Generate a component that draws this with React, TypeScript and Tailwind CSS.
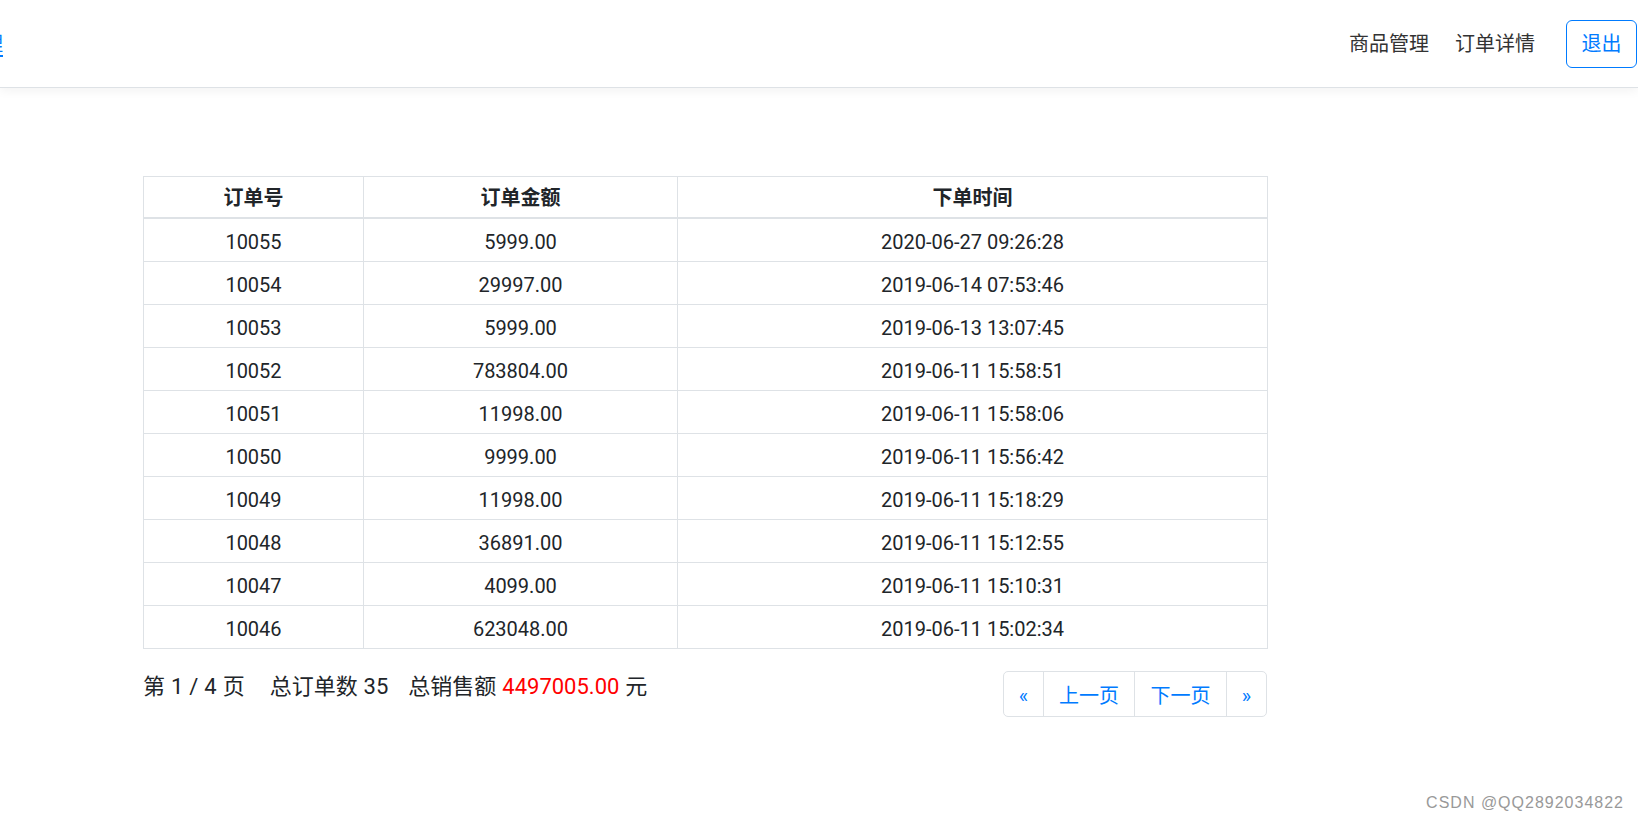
import React from "react";

type Order = { id: string; amount: string; time: string };

const orders: Order[] = [
  { id: "10055", amount: "5999.00", time: "2020-06-27 09:26:28" },
  { id: "10054", amount: "29997.00", time: "2019-06-14 07:53:46" },
  { id: "10053", amount: "5999.00", time: "2019-06-13 13:07:45" },
  { id: "10052", amount: "783804.00", time: "2019-06-11 15:58:51" },
  { id: "10051", amount: "11998.00", time: "2019-06-11 15:58:06" },
  { id: "10050", amount: "9999.00", time: "2019-06-11 15:56:42" },
  { id: "10049", amount: "11998.00", time: "2019-06-11 15:18:29" },
  { id: "10048", amount: "36891.00", time: "2019-06-11 15:12:55" },
  { id: "10047", amount: "4099.00", time: "2019-06-11 15:10:31" },
  { id: "10046", amount: "623048.00", time: "2019-06-11 15:02:34" },
];

function Navbar() {
  return (
    <nav className="h-[88px] bg-white border-b border-[#dee2e6] shadow-[0_3px_10px_rgba(0,0,0,0.05)] flex items-center justify-between pr-px">
      <a className="-ml-[77px] text-[20px] leading-[30px] text-[#007bff] underline underline-offset-4">
        后台管理
      </a>
      <div className="flex items-center">
        <a className="text-[20px] leading-[30px] text-[#333]">商品管理</a>
        <a className="ml-[26px] text-[20px] leading-[30px] text-[#333]">订单详情</a>
        <button className="ml-[31px] w-[71px] h-[48px] border border-[#007bff] rounded-[6px] text-[20px] text-[#007bff] flex items-center justify-center">
          退出
        </button>
      </div>
    </nav>
  );
}

function OrderTable() {
  return (
    <table className="w-[1124px] table-fixed border-collapse text-[20px] text-[#212529]">
      <colgroup>
        <col className="w-[220px]" />
        <col className="w-[314px]" />
        <col className="w-[590px]" />
      </colgroup>
      <thead>
        <tr>
          {["订单号", "订单金额", "下单时间"].map((h) => (
            <th
              key={h}
              className="border border-[#dee2e6] border-b-2 pt-[9px] pb-[7px] leading-[24px] font-bold text-center"
            >
              {h}
            </th>
          ))}
        </tr>
      </thead>
      <tbody>
        {orders.map((o) => (
          <tr key={o.id}>
            <td className="border border-[#dee2e6] pt-[10px] pb-[6px] leading-[26px] text-center">{o.id}</td>
            <td className="border border-[#dee2e6] pt-[10px] pb-[6px] leading-[26px] text-center">{o.amount}</td>
            <td className="border border-[#dee2e6] pt-[10px] pb-[6px] leading-[26px] text-center">{o.time}</td>
          </tr>
        ))}
      </tbody>
    </table>
  );
}

function Pager() {
  return (
    <div className="flex border border-[#dee2e6] rounded-[5px] text-[20px] text-[#007bff]">
      <a className="w-[39px] h-[44px] flex items-center justify-center pt-[4px]">«</a>
      <a className="w-[91px] h-[44px] flex items-center justify-center border-l border-[#dee2e6] pt-[4px]">上一页</a>
      <a className="w-[92px] h-[44px] flex items-center justify-center border-l border-[#dee2e6] pt-[4px]">下一页</a>
      <a className="w-[40px] h-[44px] flex items-center justify-center border-l border-[#dee2e6] pt-[4px]">»</a>
    </div>
  );
}

export default function App() {
  return (
    <div className="relative min-h-screen bg-white font-['Roboto','Noto_Sans_CJK_SC',sans-serif] overflow-hidden">
      <Navbar />
      <main className="pl-[143px] pt-[88px]">
        <OrderTable />
        <div className="w-[1124px] mt-[22px] flex items-start justify-between">
          <p className="text-[22px] leading-[32px] text-[#212529] [word-spacing:0.5px]">
            <span>第 1 / 4 页</span>
            <span className="ml-[25px]">总订单数 35</span>
            <span className="ml-[20px]">
              总销售额 <span className="text-[#ff0000]">4497005.00</span> 元
            </span>
          </p>
          <Pager />
        </div>
      </main>
      <div className="absolute right-[14px] top-[793px] font-['Liberation_Sans',Arial,sans-serif] text-[16px] leading-[20px] tracking-[1px] text-[#999]">
        CSDN @QQ2892034822
      </div>
    </div>
  );
}
